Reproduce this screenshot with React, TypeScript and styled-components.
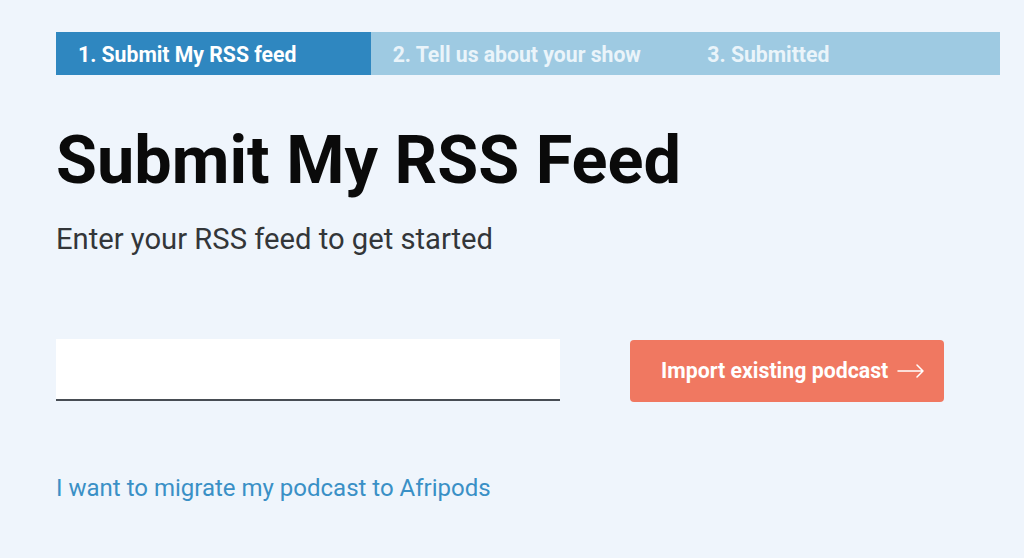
import { createGlobalStyle } from "styled-components";
import styled from "styled-components";

const GlobalStyle = createGlobalStyle`
  html, body {
    margin: 0;
    padding: 0;
    background: #eff5fc;
    font-family: Roboto, "Noto Sans", sans-serif;
  }
`;

const Page = styled.div`
  box-sizing: border-box;
  width: 1024px;
  height: 558px;
  padding: 32px 24px 0 56px;
`;

const Steps = styled.div`
  display: grid;
  grid-template-columns: repeat(3, 1fr);
  height: 43px;
  background: #9ecae2;
`;

const Step = styled.div<{ $active?: boolean }>`
  display: flex;
  align-items: center;
  padding-left: 22px;
  padding-top: 2px;
  background: ${(p) => (p.$active ? "#2f87c0" : "transparent")};
  color: ${(p) => (p.$active ? "#ffffff" : "#eaf4fa")};
  font-size: 21.2px;
  font-weight: 700;
`;

const Title = styled.h1`
  margin: 52px 0 0;
  font-size: 66.6px;
  font-weight: 700;
  line-height: 1;
  color: #0a0a0a;
`;

const Subtitle = styled.p`
  margin: 31px 0 0;
  font-size: 29.2px;
  font-weight: 400;
  line-height: 1;
  color: #333639;
`;

const FormRow = styled.div`
  display: flex;
  align-items: flex-start;
  gap: 70px;
  margin-top: 85px;
`;

const Input = styled.input`
  box-sizing: border-box;
  width: 504px;
  height: 62px;
  border: none;
  border-bottom: 2px solid #474d54;
  background: #ffffff;
  padding: 0 16px;
  font-family: inherit;
  font-size: 20px;
  outline: none;
`;

const ImportButton = styled.button`
  box-sizing: border-box;
  display: flex;
  align-items: center;
  gap: 9px;
  width: 314px;
  height: 62px;
  margin-top: 1px;
  padding: 0 0 0 31px;
  border: none;
  border-radius: 4px;
  background: #f07861;
  color: #ffffff;
  font-family: inherit;
  font-size: 21.3px;
  font-weight: 700;
  cursor: pointer;
`;

const MigrateLink = styled.a`
  display: inline-block;
  margin-top: 74px;
  font-size: 24px;
  line-height: 1;
  color: #3a90c6;
  text-decoration: none;
`;

export default function App() {
  return (
    <>
      <GlobalStyle />
      <Page>
        <Steps>
          <Step $active>1. Submit My RSS feed</Step>
          <Step>2. Tell us about your show</Step>
          <Step>3. Submitted</Step>
        </Steps>
        <Title>Submit My RSS Feed</Title>
        <Subtitle>Enter your RSS feed to get started</Subtitle>
        <FormRow>
          <Input type="text" />
          <ImportButton>
            Import existing podcast
            <svg width="28" height="14" viewBox="0 0 28 14" fill="none" stroke="#fff" strokeWidth="1.5" strokeLinecap="round" strokeLinejoin="round">
              <path d="M1 7h25M20 1l6 6-6 6" />
            </svg>
          </ImportButton>
        </FormRow>
        <MigrateLink href="#">I want to migrate my podcast to Afripods</MigrateLink>
      </Page>
    </>
  );
}
